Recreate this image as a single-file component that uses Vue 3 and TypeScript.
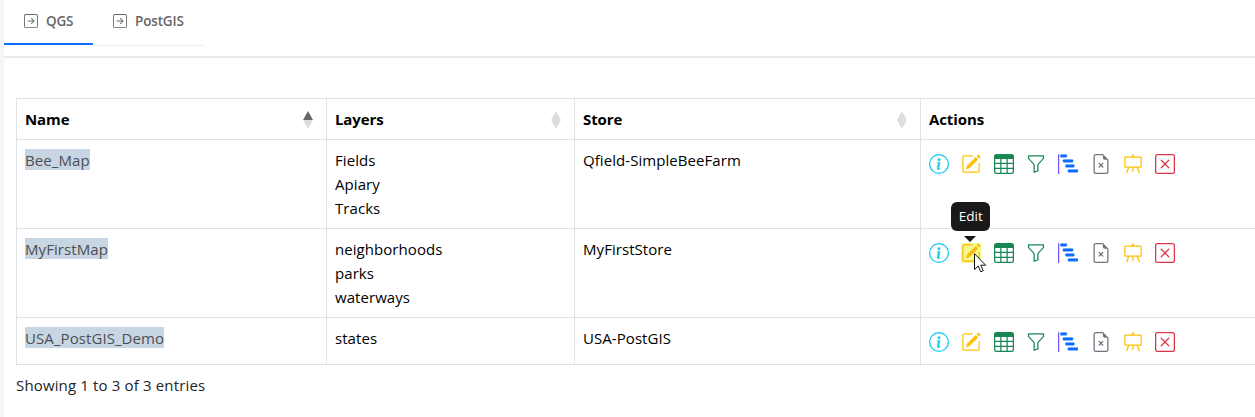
<script setup lang="ts">
interface MapRow { name: string; layers: string[]; store: string; tip?: boolean }
interface Icon { id: string; color: string; paths: string[] }

const rows: MapRow[] = [
  { name: 'Bee_Map', layers: ['Fields', 'Apiary', 'Tracks'], store: 'Qfield-SimpleBeeFarm' },
  { name: 'MyFirstMap', layers: ['neighborhoods', 'parks', 'waterways'], store: 'MyFirstStore', tip: true },
  { name: 'USA_PostGIS_Demo', layers: ['states'], store: 'USA-PostGIS' },
]
const headers = ['Name', 'Layers', 'Store', 'Actions']
const tabs = ['QGS', 'PostGIS']

const icons: Icon[] = [
  { id: 'info', color: '#0dcaf0', paths: [
    'M8 15A7 7 0 1 1 8 1a7 7 0 0 1 0 14m0 1A8 8 0 1 0 8 0a8 8 0 0 0 0 16',
    'm8.93 6.588-2.29.287-.082.38.45.083c.294.07.352.176.288.469l-.738 3.468c-.194.897.105 1.319.808 1.319.545 0 1.178-.252 1.465-.598l.088-.416c-.2.176-.492.246-.686.246-.275 0-.375-.193-.304-.533zM9 4.5a1 1 0 1 1-2 0 1 1 0 0 1 2 0'] },
  { id: 'edit', color: '#ffc107', paths: [
    'M15.502 1.94a.5.5 0 0 1 0 .706L14.459 3.69l-2-2L13.502.646a.5.5 0 0 1 .707 0l1.293 1.293zm-1.75 2.456-2-2L4.939 9.21a.5.5 0 0 0-.121.196l-.805 2.414a.25.25 0 0 0 .316.316l2.414-.805a.5.5 0 0 0 .196-.12l6.813-6.814z',
    'M1 13.5A1.5 1.5 0 0 0 2.5 15h11a1.5 1.5 0 0 0 1.5-1.5v-6a.5.5 0 0 0-1 0v6a.5.5 0 0 1-.5.5h-11a.5.5 0 0 1-.5-.5v-11a.5.5 0 0 1 .5-.5H9a.5.5 0 0 0 0-1H2.5A1.5 1.5 0 0 0 1 2.5z'] },
  { id: 'table', color: '#198754', paths: [
    'M0 2a2 2 0 0 1 2-2h12a2 2 0 0 1 2 2v12a2 2 0 0 1-2 2H2a2 2 0 0 1-2-2zm15 2h-4v3h4zm0 4h-4v3h4zm0 4h-4v3h3a1 1 0 0 0 1-1zm-5 3v-3H6v3zm-5 0v-3H1v2a1 1 0 0 0 1 1zm-4-4h4V8H1zm0-4h4V4H1zm5-3v3h4V4zm4 4H6v3h4z'] },
  { id: 'filter', color: '#198754', paths: [
    'M1.5 1.5A.5.5 0 0 1 2 1h12a.5.5 0 0 1 .5.5v2a.5.5 0 0 1-.128.334L10 8.692V13.5a.5.5 0 0 1-.342.474l-3 1A.5.5 0 0 1 6 14.5V8.692L1.628 3.834A.5.5 0 0 1 1.5 3.5zm1 .5v1.308l4.372 4.858A.5.5 0 0 1 7 8.5v5.306l2-.666V8.5a.5.5 0 0 1 .128-.334L13.5 3.308V2z'] },
  { id: 'steps', color: '#0d6efd', paths: [
    'M2 1a.5.5 0 0 1 .5-.5h4a.5.5 0 0 1 .5.5v1a.5.5 0 0 1-.5.5h-4A.5.5 0 0 1 2 2zm2 4a.5.5 0 0 1 .5-.5h7a.5.5 0 0 1 .5.5v1a.5.5 0 0 1-.5.5h-7A.5.5 0 0 1 4 6zm2 4a.5.5 0 0 1 .5-.5h6a.5.5 0 0 1 .5.5v1a.5.5 0 0 1-.5.5h-6A.5.5 0 0 1 6 10zm2 4a.5.5 0 0 1 .5-.5h7a.5.5 0 0 1 .5.5v1a.5.5 0 0 1-.5.5h-7a.5.5 0 0 1-.5-.5z'] },
  { id: 'file', color: '#6c757d', paths: [
    'M6.854 7.146a.5.5 0 1 0-.708.708L7.293 9l-1.147 1.146a.5.5 0 0 0 .708.708L8 9.707l1.146 1.147a.5.5 0 0 0 .708-.708L8.707 9l1.147-1.146a.5.5 0 0 0-.708-.708L8 8.293z',
    'M14 14V4.5L9.5 0H4a2 2 0 0 0-2 2v12a2 2 0 0 0 2 2h8a2 2 0 0 0 2-2M9.5 3A1.5 1.5 0 0 0 11 4.5h2V14a1 1 0 0 1-1 1H4a1 1 0 0 1-1-1V2a1 1 0 0 1 1-1h5.5z'] },
  { id: 'easel', color: '#ffc107', paths: [
    'M8 0a.5.5 0 0 1 .473.337L9.046 2H14a1 1 0 0 1 1 1v7a1 1 0 0 1-1 1h-1.85l1.323 3.837a.5.5 0 1 1-.946.326L11.092 11H8.5v3a.5.5 0 0 1-1 0v-3H4.908l-1.435 4.163a.5.5 0 1 1-.946-.326L3.85 11H2a1 1 0 0 1-1-1V3a1 1 0 0 1 1-1h4.954L7.527.337A.5.5 0 0 1 8 0M2 3v7h12V3z'] },
  { id: 'delete', color: '#dc3545', paths: [
    'M14 1a1 1 0 0 1 1 1v12a1 1 0 0 1-1 1H2a1 1 0 0 1-1-1V2a1 1 0 0 1 1-1zM2 0a2 2 0 0 0-2 2v12a2 2 0 0 0 2 2h12a2 2 0 0 0 2-2V2a2 2 0 0 0-2-2z',
    'M4.646 4.646a.5.5 0 0 1 .708 0L8 7.293l2.646-2.647a.5.5 0 0 1 .708.708L8.707 8l2.647 2.646a.5.5 0 0 1-.708.708L8 8.707l-2.646 2.647a.5.5 0 0 1-.708-.708L7.293 8 4.646 5.354a.5.5 0 0 1 0-.708'] },
]
</script>

<template>
  <main class="page">
    <nav class="tabs">
      <a v-for="(tab, i) in tabs" :key="tab" class="tab" :class="{ active: i === 0 }">
        <svg class="tab-icon" viewBox="0 0 16 16" fill="currentColor">
          <path fill-rule="evenodd" d="M15 2a1 1 0 0 0-1-1H2a1 1 0 0 0-1 1v12a1 1 0 0 0 1 1h12a1 1 0 0 0 1-1zM0 2a2 2 0 0 1 2-2h12a2 2 0 0 1 2 2v12a2 2 0 0 1-2 2H2a2 2 0 0 1-2-2zm4.5 5.5a.5.5 0 0 0 0 1h5.793l-2.147 2.146a.5.5 0 0 0 .708.708l3-3a.5.5 0 0 0 0-.708l-3-3a.5.5 0 1 0-.708.708L10.293 7.5z" />
        </svg>
        <span>{{ tab }}</span>
      </a>
    </nav>
    <section class="content">
      <div class="grid">
        <div v-for="(h, i) in headers" :key="h" class="cell head">
          <span>{{ h }}</span>
          <svg v-if="i < 3" class="sort" viewBox="0 0 10 18">
            <path d="M5 0L10 9H0Z" :fill="i === 0 ? '#666' : '#dedede'" />
            <path d="M0 9H10L5 18Z" fill="#dedede" />
          </svg>
        </div>
        <template v-for="row in rows" :key="row.name">
          <div class="cell"><a class="name">{{ row.name }}</a></div>
          <div class="cell"><div v-for="l in row.layers" :key="l">{{ l }}</div></div>
          <div class="cell">{{ row.store }}</div>
          <div class="cell actions">
            <span v-for="icon in icons" :key="icon.id" class="action" :class="{ hot: row.tip && icon.id === 'edit' }">
              <svg class="icon" :class="icon.id" viewBox="0 0 16 16" :fill="icon.color">
                <path v-if="icon.id === 'steps'" d="M.5 0a.5.5 0 0 1 .5.5v15a.5.5 0 0 1-1 0V.5A.5.5 0 0 1 .5 0" fill="#7952f5" />
                <path v-for="p in icon.paths" :key="p" :d="p" />
              </svg>
              <template v-if="row.tip && icon.id === 'edit'">
                <span class="tooltip">Edit</span>
                <svg class="pointer" viewBox="0 0 12 20">
                  <path d="M.5.7V16.5L4.2 13l2.5 5.8 2.5-1.1-2.5-5.5h5z" fill="#fff" stroke="#111" />
                </svg>
              </template>
            </span>
          </div>
        </template>
      </div>
      <p class="summary">Showing 1 to 3 of 3 entries</p>
    </section>
  </main>
</template>

<style>
body { margin: 0; background: #fff; overflow: hidden; }
</style>

<style scoped>
.page {
  box-sizing: border-box;
  height: 417px;
  border-left: 4px solid #f4f6f9;
  font: 15px/24px "Open Sans", "Noto Sans", sans-serif;
  color: #000;
  overflow: hidden;
}
.tabs { display: flex; height: 56px; border-bottom: 2px solid #e8eaed; }
.tab {
  box-sizing: border-box;
  display: flex;
  align-items: center;
  gap: 8px;
  width: 111px;
  height: 46px;
  padding: 0 0 4px 20px;
  border-bottom: 1px solid #eceef1;
  color: #666;
  font-size: 13.5px;
  font-weight: 600;
  letter-spacing: -0.15px;
}
.tab.active { width: 89px; height: 45px; padding-bottom: 2px; border-bottom: 2px solid #0d6efd; }
.tab-icon { width: 14px; height: 14px; }
.content { padding: 40px 0 0 12px; }
.grid {
  display: grid;
  grid-template-columns: 310px 248px 346px 400px;
  grid-template-rows: 41px 89px 89px 47px;
  width: 1304px;
  border-top: 1px solid #dee2e6;
  border-left: 1px solid #dee2e6;
}
.cell {
  padding: 8px 8px 0;
  border-right: 1px solid #dee2e6;
  border-bottom: 1px solid #dee2e6;
  letter-spacing: 0.06px;
}
.head { display: flex; justify-content: space-between; padding: 8px 13.5px 0 8px; font-weight: 700; letter-spacing: -0.1px; }
.sort { width: 10px; height: 18px; margin-top: 4px; }
.name { display: inline-block; height: 21px; line-height: 22px; color: #4b4f54; background: #c8d5e3; letter-spacing: 0.08px; }
.actions { display: flex; align-items: flex-start; gap: 12.35px; padding-top: 14px; letter-spacing: 0; }
.action { position: relative; width: 20px; height: 20px; }
.icon { display: block; width: 20px; height: 20px; }
.info path:last-child { stroke: #0dcaf0; stroke-width: 0.3; }
.steps path:last-child { stroke: #0d6efd; stroke-width: 0.4; }
.hot { background: #f4fb8c; }
.hot .icon { fill: #fcb90b; }
.tooltip {
  position: absolute;
  left: -10px;
  top: -41px;
  width: 39px;
  height: 29px;
  border-radius: 6px;
  background: #191919;
  color: #fff;
  font-size: 13.5px;
  line-height: 29px;
  text-align: center;
}
.tooltip::after {
  content: "";
  position: absolute;
  left: 13px;
  top: 34px;
  border: 6px solid transparent;
  border-top: 6px solid #191919;
  border-bottom: 0;
}
.pointer { position: absolute; left: 13px; top: 10px; width: 12px; height: 20px; }
.summary { margin: 8px 0 0; color: #212529; letter-spacing: 0.15px; }
</style>
